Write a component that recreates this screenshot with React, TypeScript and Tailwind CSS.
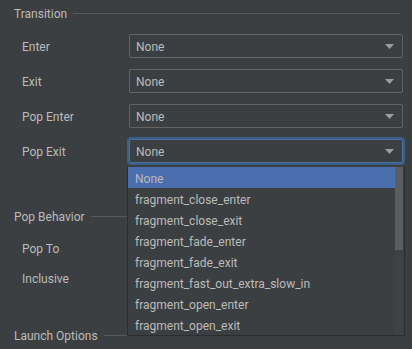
import React from "react";

const options = [
  "None",
  "fragment_close_enter",
  "fragment_close_exit",
  "fragment_fade_enter",
  "fragment_fade_exit",
  "fragment_fast_out_extra_slow_in",
  "fragment_open_enter",
  "fragment_open_exit",
];

function Arrow() {
  return (
    <svg width="9" height="5" viewBox="0 0 9 5" className="shrink-0">
      <path d="M0 0 L9 0 L4.5 5 Z" fill="#9d9d9d" />
    </svg>
  );
}

function Section({ title, className = "" }: { title: string; className?: string }) {
  return (
    <div className={`flex h-[26px] items-center pl-[14px] pr-[12px] ${className}`}>
      <span className="pt-[1px] text-[#bbbbbb]">{title}</span>
      <div className="ml-[6px] h-px flex-1 bg-[#555758]" />
    </div>
  );
}

function Combo({ label, focused = false }: { label: string; focused?: boolean }) {
  return (
    <div className="mt-[11px] flex h-[24px] items-center first:mt-[8px]">
      <span className="w-[129px] shrink-0 pl-[22px] pt-[1px] text-[#bbbbbb]">{label}</span>
      <div
        className={`flex h-[24px] w-[274px] items-center justify-between rounded-[2px] border pl-[6px] pr-[8px] ${
          focused
            ? "border-[#4a72a0] shadow-[0_0_0_2px_#3a5e86]"
            : "border-[#646464]"
        }`}
      >
        <span className="pt-[2px] text-[#bbbbbb]">None</span>
        <Arrow />
      </div>
    </div>
  );
}

export default function App() {
  return (
    <div
      className="relative h-[349px] w-[412px] overflow-hidden bg-[#3c3f41] text-[12px] leading-none"
      style={{ fontFamily: 'Roboto, "Noto Sans", sans-serif' }}
    >
      <Section title="Transition" />
      <div className="flex flex-col">
        <Combo label="Enter" />
        <Combo label="Exit" />
        <Combo label="Pop Enter" />
        <Combo label="Pop Exit" focused />
      </div>

      <Section title="Pop Behavior" className="mt-[40px]" />
      <div className="mt-[7px] flex h-[24px] items-center pl-[22px] pt-[1px] text-[#bbbbbb]">Pop To</div>
      <div className="mt-[6px] flex h-[24px] items-center pl-[22px] pt-[1px] text-[#bbbbbb]">Inclusive</div>

      <Section title="Launch Options" className="mt-[32px]" />

      {/* open dropdown list */}
      <div className="absolute left-[127px] top-[167px] flex h-[169px] w-[278px] border-b border-l border-r border-[#2b2d2e] bg-[#3c3f41]">
        <div className="flex flex-1 flex-col">
          {options.map((o, i) => (
            <div
              key={o}
              className={`flex h-[21px] items-center pl-[7px] pt-[2px] ${
                i === 0 ? "bg-[#4b6eaf] text-[#bbbbbb]" : "text-[#bbbbbb]"
              }`}
            >
              {o}
            </div>
          ))}
        </div>
        <div className="mr-[1px] flex w-[8px] flex-col bg-[#3f4244]">
          <div className="h-[83px] w-full bg-[#5b5e60]" />
        </div>
      </div>
    </div>
  );
}
